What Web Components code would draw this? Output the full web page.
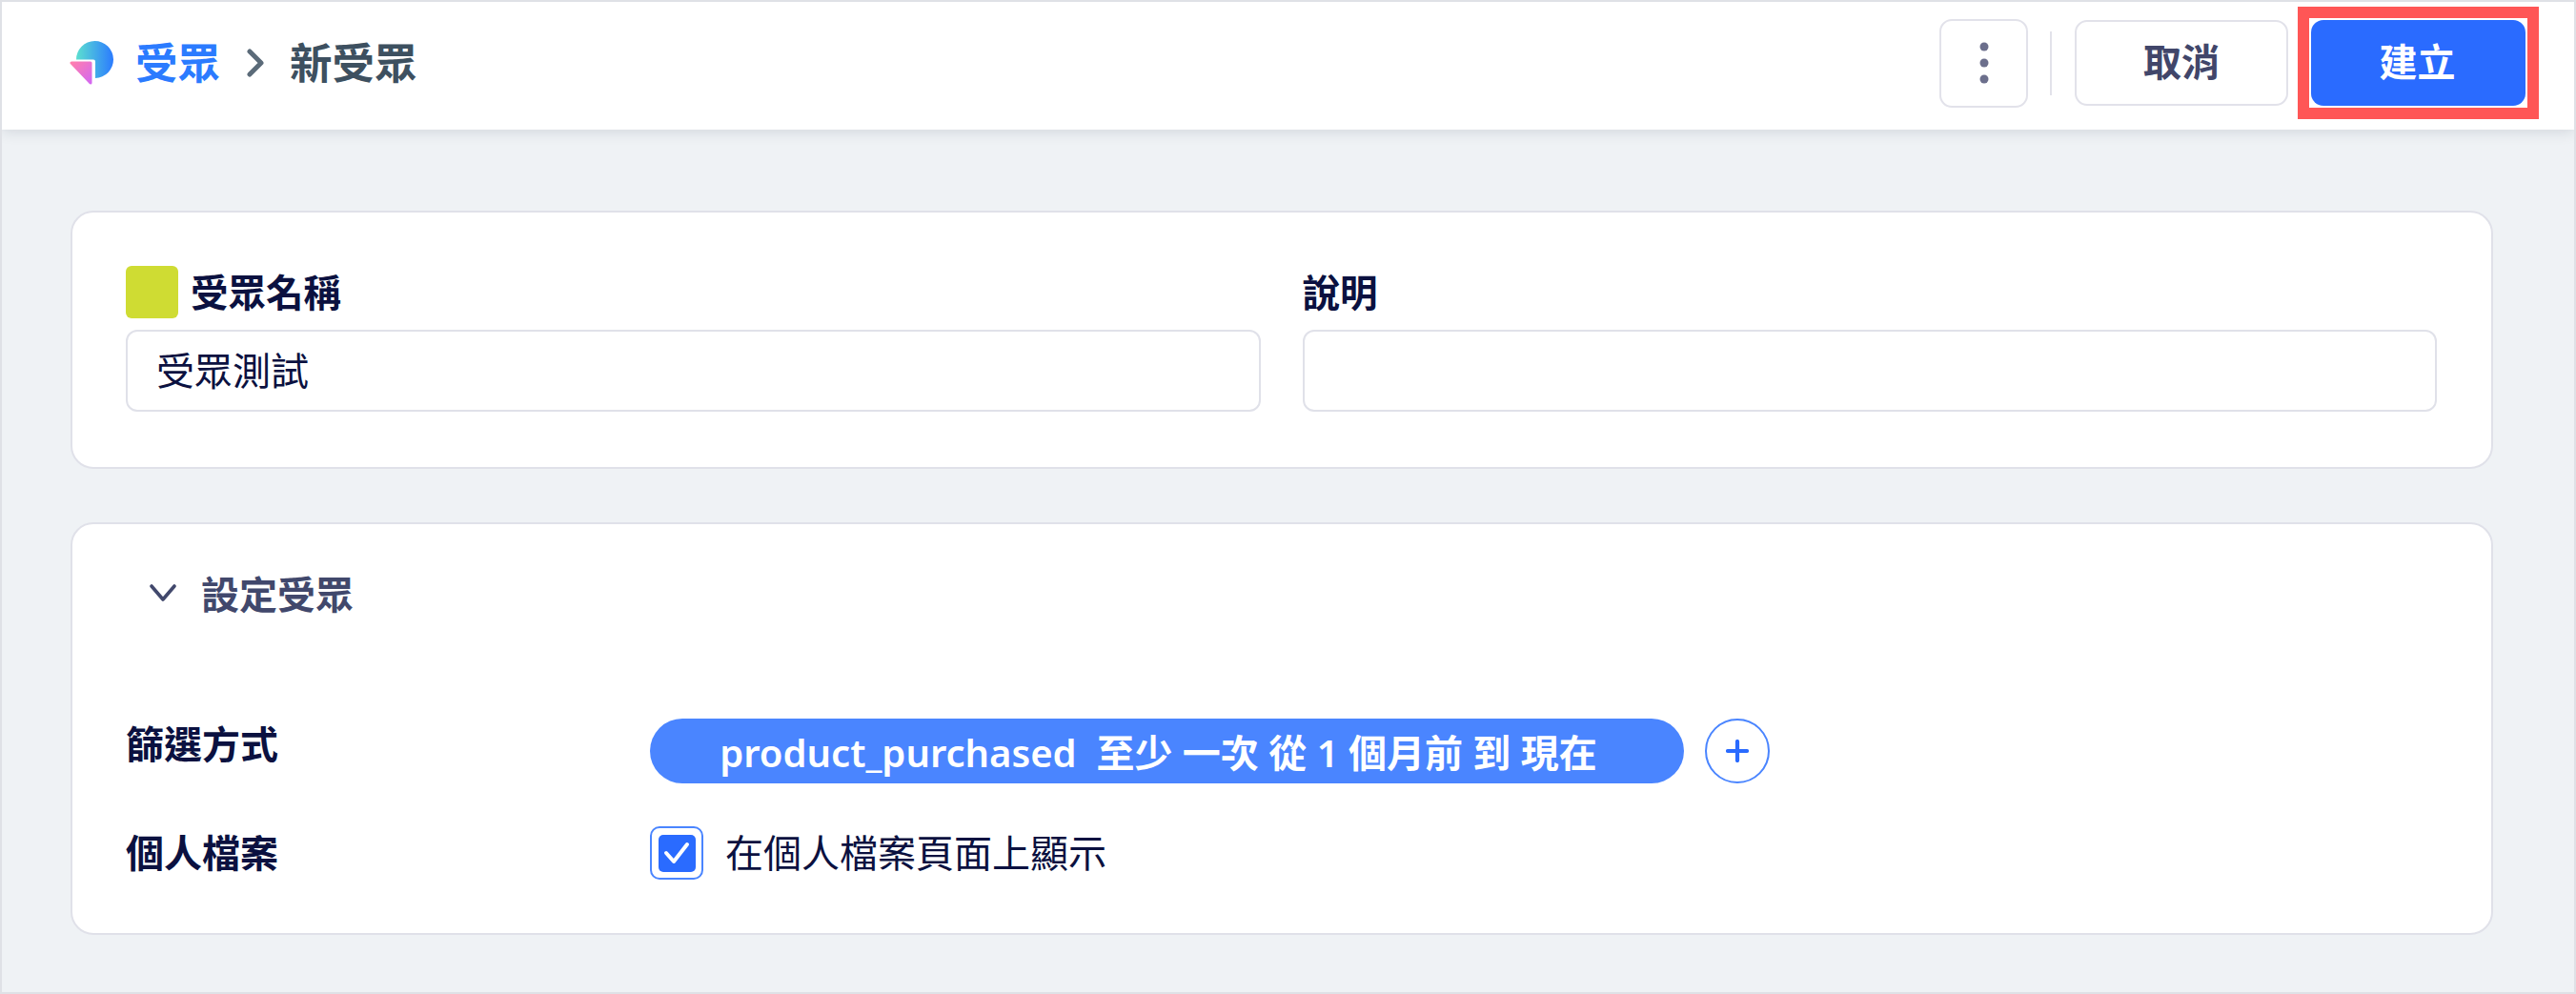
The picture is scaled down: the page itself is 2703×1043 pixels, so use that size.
<!DOCTYPE html>
<html lang="zh-Hant">
<head>
<meta charset="utf-8">
<title>新受眾</title>
<style>
  html, body { margin: 0; padding: 0; height: 100%; }
  body { font-family: "Noto Sans", "Noto Sans CJK TC", sans-serif; color: #0b1140; }
</style>
</head>
<body>
<audience-page>
  <audience-header slot="header">
    <top-button slot="actions" kind="more"></top-button>
    <top-button slot="actions" kind="divider"></top-button>
    <top-button slot="actions" kind="cancel">取消</top-button>
    <top-button slot="actions" kind="create">建立</top-button>
  </audience-header>

  <audience-card>
    <div style="display:grid;grid-template-columns:1fr 1fr;column-gap:44px">
      <text-field label="受眾名稱" value="受眾測試" swatch="#cfdc33"></text-field>
      <text-field label="說明"></text-field>
    </div>
  </audience-card>

  <audience-card>
    <section-title>設定受眾</section-title>
    <form-row label="篩選方式" top>
      <filter-pill>product_purchased  至少 一次 從 1 個月前 到 現在</filter-pill>
    </form-row>
    <form-row label="個人檔案" style="margin-bottom:-2px">
      <check-box>在個人檔案頁面上顯示</check-box>
    </form-row>
  </audience-card>
</audience-page>

<script>
class AudiencePage extends HTMLElement {
  constructor(){
    super();
    this.shadowDOM = this.attachShadow({mode:'open'});
    this.shadowDOM.innerHTML = `
    <style>
      :host {
        display: block;
        box-sizing: border-box;
        width: 2703px;
        height: 1043px;
        overflow: hidden;
        background: #eff2f5;
        border: 2px solid #dfe1e6;
      }
      main {
        display: flex;
        flex-direction: column;
        gap: 56px;
        padding: 85px 85px 0 72px;
      }
    </style>
    <slot name="header"></slot>
    <main><slot></slot></main>`;
  }
}

class AudienceHeader extends HTMLElement {
  constructor(){
    super();
    this.shadowDOM = this.attachShadow({mode:'open'});
    this.shadowDOM.innerHTML = `
    <style>
      :host {
        display: flex;
        align-items: center;
        box-sizing: border-box;
        height: 134px;
        padding: 0 37px 6px 71px;
        background: #fff;
        box-shadow: 0 2px 14px rgba(30, 45, 70, 0.14);
        position: relative;
      }
      .crumb {
        display: flex;
        align-items: center;
        font-size: 44.5px;
        font-weight: 700;
        line-height: 60px;
        color: #3d5060;
      }
      svg.logo { width: 46px; height: 46px; margin-right: 23px; display: block; }
      .link { color: #2b7bff; }
      svg.sep { width: 18px; height: 30px; margin: 0 27px 0 28px; display: block; }
      .actions { margin-left: auto; display: flex; align-items: center; }
    </style>
    <div class="crumb">
      <svg class="logo" viewBox="0 0 46 46">
        <defs>
          <linearGradient id="round" x1="0" x2="1" y1="0" y2="0">
            <stop offset="0" stop-color="#5cdfd0"/>
            <stop offset="1" stop-color="#2b7bff"/>
          </linearGradient>
          <linearGradient id="tri" x1="0" x2="1" y1="0" y2="1">
            <stop offset="0" stop-color="#ff7fae"/>
            <stop offset="1" stop-color="#d468f0"/>
          </linearGradient>
        </defs>
        <path d="M7 19.5A19.5 19.5 0 1 1 27 39V21.5a2 2 0 0 0-2-2z" fill="url(#round)"/>
        <path d="M2 23H22V44z" fill="url(#tri)" stroke="url(#tri)" stroke-width="3" stroke-linejoin="round"/>
      </svg>
      <span class="link">受眾</span>
      <svg class="sep" viewBox="0 0 18 30"><path d="M3 3l12 12L3 27" fill="none" stroke="#5b6b79" stroke-width="5" stroke-linecap="round" stroke-linejoin="round"/></svg>
      <span>新受眾</span>
    </div>
    <div class="actions"><slot name="actions"></slot></div>`;
  }
}

class TopButton extends HTMLElement {
  constructor(){
    super();
    this.shadowDOM = this.attachShadow({mode:'open'});
  }
  connectedCallback(){
    this.render();
  }
  render(){
    const kind = this.getAttribute('kind');
    let body = '<slot></slot>';
    if (kind === 'more') {
      body = `<svg width="10" height="44" viewBox="0 0 10 44"><ellipse cx="5" cy="5" rx="4.5" ry="4.5" fill="#6c6f8c"/><ellipse cx="5" cy="22" rx="4.5" ry="4.5" fill="#6c6f8c"/><ellipse cx="5" cy="39" rx="4.5" ry="4.5" fill="#6c6f8c"/></svg>`;
    }
    this.shadowDOM.innerHTML = `
    <style>
      :host { display: block; }
      .btn {
        box-sizing: border-box;
        display: flex;
        align-items: center;
        justify-content: center;
        font-size: 40px;
        font-weight: 700;
        line-height: 50px;
        border-radius: 13px;
      }
      .more { width: 93px; height: 93px; border: 2px solid #e2e2ea; background: #fff; }
      .divider { width: 2px; height: 67px; background: #e2e2ea; margin: 0 24px 0 23px; }
      .cancel { width: 224px; height: 90px; border: 2px solid #e2e2ea; background: #fff; color: #41466a; margin-right: 10px; padding-bottom: 3px; }
      .create { width: 225px; height: 90px; background: #2a6bff; color: #fff; padding: 0 2px 3px 0; }
      .mark { border: 12px solid #ff5656; padding: 2px; background: #fff; }
    </style>
    ${kind === 'create' ? '<div class="mark"><div class="btn create">' + body + '</div></div>' : '<div class="' + (kind === 'divider' ? kind : 'btn ' + kind) + '">' + (kind === 'divider' ? '' : body) + '</div>'}`;
  }
}

class AudienceCard extends HTMLElement {
  constructor(){
    super();
    this.shadowDOM = this.attachShadow({mode:'open'});
    this.shadowDOM.innerHTML = `
    <style>
      :host {
        display: block;
        box-sizing: border-box;
        padding: 56px 57px 58px 56px;
        background: #fff;
        border: 2px solid #e0e1e9;
        border-radius: 24px;
      }
    </style>
    <slot></slot>`;
  }
}

class TextField extends HTMLElement {
  constructor(){
    super();
    this.shadowDOM = this.attachShadow({mode:'open'});
  }
  connectedCallback(){
    this.render();
  }
  render(){
    const swatch = this.getAttribute('swatch');
    this.shadowDOM.innerHTML = `
    <style>
      :host { display: block; min-width: 0; }
      .label {
        display: flex;
        align-items: center;
        gap: 13px;
        height: 55px;
        margin-bottom: 12px;
        font-size: 39.5px;
        font-weight: 700;
        color: #0b1140;
      }
      .label b { font-weight: 700; padding-bottom: 4px; }
      .swatch { width: 55px; height: 55px; border-radius: 6px; }
      .box {
        box-sizing: border-box;
        display: flex;
        align-items: center;
        height: 86px;
        padding: 0 30px 5px;
        border: 2px solid #e0e1e9;
        border-radius: 12px;
        font-size: 40px;
        color: #0b1140;
      }
    </style>
    <div class="label">${swatch ? `<span class="swatch" style="background:${swatch}"></span>` : ''}<b>${this.getAttribute('label')}</b></div>
    <div class="box">${this.getAttribute('value') || ''}</div>`;
  }
}

class SectionTitle extends HTMLElement {
  constructor(){
    super();
    this.shadowDOM = this.attachShadow({mode:'open'});
    this.shadowDOM.innerHTML = `
    <style>
      :host {
        display: flex;
        align-items: center;
        height: 48px;
        margin: -8px 0 108px 25px;
        font-size: 40px;
        font-weight: 700;
        color: #41486c;
      }
      svg { width: 28px; height: 18px; margin-right: 26px; display: block; }
    </style>
    <svg viewBox="0 0 28 18"><path d="M2 2l12 14L26 2" fill="none" stroke="#41486c" stroke-width="3.6" stroke-linecap="round" stroke-linejoin="round"/></svg>
    <span><slot></slot></span>`;
  }
}

class FormRow extends HTMLElement {
  constructor(){
    super();
    this.shadowDOM = this.attachShadow({mode:'open'});
  }
  connectedCallback(){
    this.render();
  }
  render(){
    const top = this.hasAttribute('top');
    this.shadowDOM.innerHTML = `
    <style>
      :host {
        display: grid;
        grid-template-columns: 550px 1fr;
        align-items: ${top ? 'start' : 'center'};
        margin-bottom: ${top ? '45px' : '0'};
      }
      .label {
        font-size: 40px;
        font-weight: 700;
        line-height: 48px;
        color: #0b1140;
        margin-top: ${top ? '3px' : '0'};
      }
    </style>
    <div class="label">${this.getAttribute('label')}</div>
    <div><slot></slot></div>`;
  }
}

class FilterPill extends HTMLElement {
  constructor(){
    super();
    this.shadowDOM = this.attachShadow({mode:'open'});
    this.shadowDOM.innerHTML = `
    <style>
      :host { display: flex; align-items: center; gap: 22px; }
      .pill {
        box-sizing: border-box;
        display: flex;
        align-items: center;
        justify-content: center;
        width: 1085px;
        height: 68px;
        padding-right: 18px;
        border-radius: 34px;
        background: #4a85ff;
        color: #fff;
        font-size: 40px;
        font-weight: 600;
        white-space: pre;
      }
      .add {
        box-sizing: border-box;
        display: flex;
        align-items: center;
        justify-content: center;
        width: 68px;
        height: 68px;
        border: 2px solid #4a85ff;
        border-radius: 50%;
        background: #fff;
      }
      svg { width: 24px; height: 24px; display: block; }
    </style>
    <div class="pill"><slot></slot></div>
    <div class="add"><svg viewBox="0 0 24 24"><path d="M12 2v20M2 12h20" fill="none" stroke="#2a6bff" stroke-width="4.2" stroke-linecap="round"/></svg></div>`;
  }
}

class CheckBox extends HTMLElement {
  constructor(){
    super();
    this.shadowDOM = this.attachShadow({mode:'open'});
    this.shadowDOM.innerHTML = `
    <style>
      :host { display: flex; align-items: center; gap: 23px; font-size: 40px; line-height: 56px; color: #0b1140; }
      .ring {
        box-sizing: border-box;
        display: flex;
        align-items: center;
        justify-content: center;
        width: 56px;
        height: 56px;
        border: 2px solid #4a85ff;
        border-radius: 10px;
      }
      .tick {
        display: flex;
        align-items: center;
        justify-content: center;
        width: 39px;
        height: 39px;
        border-radius: 5px;
        background: #2a6bff;
      }
      svg { width: 28px; height: 24px; display: block; }
    </style>
    <div class="ring"><div class="tick"><svg viewBox="0 0 28 24"><path d="M3 12l8 9L25 3" fill="none" stroke="#fff" stroke-width="4" stroke-linecap="round" stroke-linejoin="round"/></svg></div></div>
    <span><slot></slot></span>`;
  }
}

customElements.define('audience-page', AudiencePage);
customElements.define('audience-header', AudienceHeader);
customElements.define('top-button', TopButton);
customElements.define('audience-card', AudienceCard);
customElements.define('text-field', TextField);
customElements.define('section-title', SectionTitle);
customElements.define('form-row', FormRow);
customElements.define('filter-pill', FilterPill);
customElements.define('check-box', CheckBox);
</script>
</body>
</html>
